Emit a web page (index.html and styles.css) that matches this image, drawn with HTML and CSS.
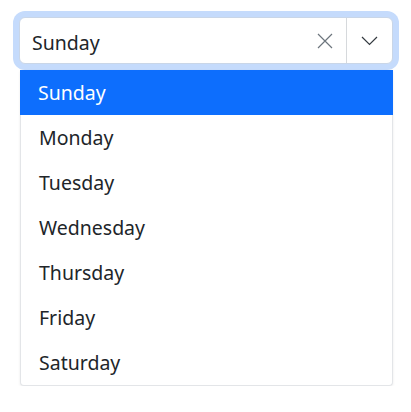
FILE: index.html
```html
<!DOCTYPE html>
<html>
<head>
<meta charset="utf-8">
<link rel="stylesheet" href="styles.css">
</head>
<body>
<div class="page">
  <div class="combo">
    <div class="combo-field">
      <span class="combo-value">Sunday</span>
      <button class="combo-clear" aria-label="Clear">
        <svg width="16" height="16" viewBox="0 0 16 16"><path d="M1 1 L15 15 M15 1 L1 15" stroke="#6c757d" stroke-width="1.2" fill="none"/></svg>
      </button>
      <span class="combo-sep"></span>
      <button class="combo-toggle" aria-label="Open">
        <svg width="17" height="10" viewBox="0 0 17 10"><path d="M1 1 L8.5 8.5 L16 1" stroke="#343a40" stroke-width="1.2" fill="none"/></svg>
      </button>
    </div>
    <ul class="combo-list">
      <li class="combo-item active">Sunday</li>
      <li class="combo-item">Monday</li>
      <li class="combo-item">Tuesday</li>
      <li class="combo-item">Wednesday</li>
      <li class="combo-item">Thursday</li>
      <li class="combo-item">Friday</li>
      <li class="combo-item">Saturday</li>
    </ul>
  </div>
</div>
</body>
</html>
```

FILE: styles.css
```css
html, body {
  margin: 0;
  padding: 0;
  background: #ffffff;
}
body {
  font-family: "Noto Sans", "Open Sans", sans-serif;
  color: #212529;
}
.page {
  padding: 17px 18px 0 19px;
}
.combo {
  width: 374px;
}
.combo-field {
  display: flex;
  align-items: center;
  height: 47px;
  box-sizing: border-box;
  border: 1px solid #c9d6e8;
  border-radius: 6px;
  box-shadow: 0 0 0 6px #c5dbfc;
  background: #fff;
}
.combo-value {
  flex: 1;
  padding-left: 12px;
  padding-top: 5px;
  font-size: 19.5px;
  line-height: 1;
  color: #212529;
}
.combo-clear, .combo-toggle {
  border: 0;
  background: none;
  padding: 0;
  display: flex;
  align-items: center;
  justify-content: center;
}
.combo-clear {
  width: 32px;
  height: 100%;
  margin-right: 5px;
}
.combo-sep {
  width: 1px;
  align-self: stretch;
  background: #d6d9dc;
}
.combo-toggle {
  width: 45px;
  height: 100%;
}
.combo-list {
  list-style: none;
  margin: 6px 0 0 1px;
  padding: 0;
  width: 373px;
  box-sizing: border-box;
  border: 1px solid #e3e5e8;
  border-top: 0;
  border-radius: 0 0 4px 4px;
  box-shadow: 0 1px 3px rgba(0,0,0,0.08);
  background: #fff;
}
.combo-item {
  height: 45px;
  display: flex;
  align-items: center;
  padding-left: 18px;
  font-size: 19.5px;
  color: #212529;
}
.combo-item.active {
  background: #0d6efd;
  color: #fff;
  margin: 0 -1px;
}
```
